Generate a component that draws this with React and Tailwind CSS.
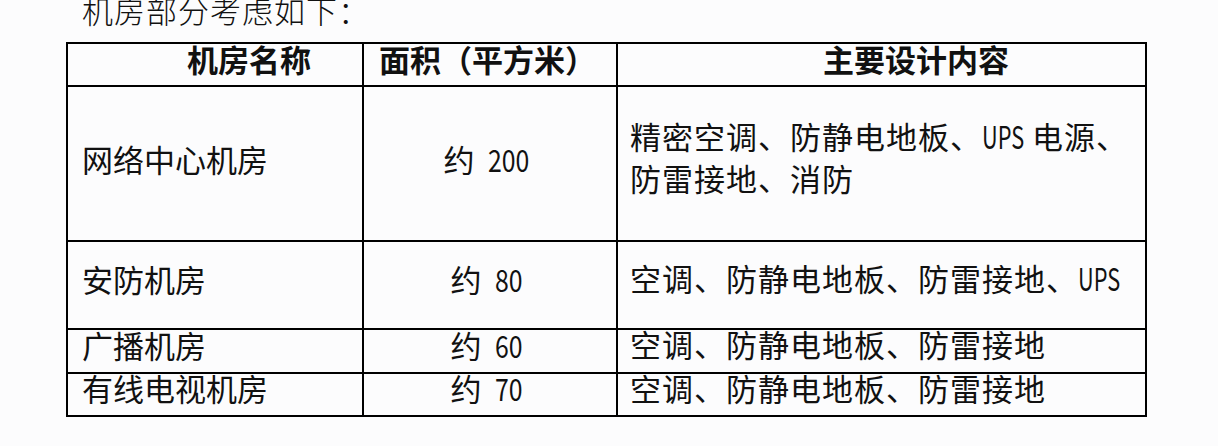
import React from "react";

const FONT = { fontFamily: '"Noto Sans CJK SC", "Noto Sans", sans-serif' };

function Num({ children, w, s = "scale-x-[0.8]" }) {
  return (
    <span className="inline-block align-baseline whitespace-nowrap" style={{ width: w }}>
      <span className={`inline-block origin-left whitespace-nowrap ${s}`}>{children}</span>
    </span>
  );
}

function Ups() {
  return (
    <span className="inline-block align-baseline whitespace-nowrap w-[42px] tracking-normal">
      <span className="inline-block origin-left whitespace-nowrap scale-x-[0.7]">UPS</span>
    </span>
  );
}

const rows = [
  {
    name: "网络中心机房",
    area: "200",
    areaW: 43,
    h: "h-[155px]",
    pb: "pb-[10px]",
    content: (
      <>
        精密空调、防静电地板、<Ups />
        <span className="inline-block w-[8px]"></span>电源、
        <br />
        防雷接地、消防
      </>
    ),
  },
  {
    name: "安防机房",
    area: "80",
    areaW: 29,
    h: "h-[88px]",
    pb: "pb-[14px]",
    content: (
      <>
        空调、防静电地板、防雷接地、<Ups />
      </>
    ),
  },
  { name: "广播机房", area: "60", areaW: 29, h: "h-[44px]", pb: "pb-[14px]", content: <>空调、防静电地板、防雷接地</> },
  { name: "有线电视机房", area: "70", areaW: 29, h: "h-[43px]", pb: "pb-[14px]", content: <>空调、防静电地板、防雷接地</> },
];

export default function App() {
  return (
    <div className="w-[1218px] h-[446px] overflow-hidden bg-[#fcfcfd] text-[#111]" style={FONT}>
      <div className="pl-[82px] -mt-[6px] h-[48px] text-[31px] leading-[31px] font-light whitespace-nowrap tracking-[1px]">
        机房部分考虑如下：
      </div>
      <div className="ml-[66px] w-[1081px] border-l-2 border-t-2 border-black">
        <div className="flex h-[43px] text-[31px] font-bold leading-none">
          <div className="w-[296px] shrink-0 border-r-2 border-b-2 border-black flex items-center pl-[119px] pb-[12px] whitespace-nowrap">
            机房名称
          </div>
          <div className="w-[254px] shrink-0 border-r-2 border-b-2 border-black flex items-center pl-[15px] pb-[12px] whitespace-nowrap">
            面积（平方米）
          </div>
          <div className="w-[529px] shrink-0 border-r-2 border-b-2 border-black flex items-center pl-[205px] pb-[12px] whitespace-nowrap">
            主要设计内容
          </div>
        </div>
        {rows.map((r) => (
          <div key={r.name} className={`flex ${r.h} text-[31px] leading-none`}>
            <div className={`w-[296px] shrink-0 border-r-2 border-b-2 border-black flex items-center pl-[14px] ${r.pb} whitespace-nowrap`}>
              {r.name}
            </div>
            <div className={`w-[254px] shrink-0 border-r-2 border-b-2 border-black flex items-center justify-center pr-[6px] ${r.pb} whitespace-nowrap`}>
              <span>约</span>
              <span className="inline-block w-[13px]"></span>
              <Num w={`${r.areaW}px`}>{r.area}</Num>
            </div>
            <div className="w-[529px] shrink-0 border-r-2 border-b-2 border-black flex items-center pl-[12px] pb-[14px] whitespace-nowrap tracking-[1px]">
              <div className="leading-[42px]">{r.content}</div>
            </div>
          </div>
        ))}
      </div>
    </div>
  );
}
